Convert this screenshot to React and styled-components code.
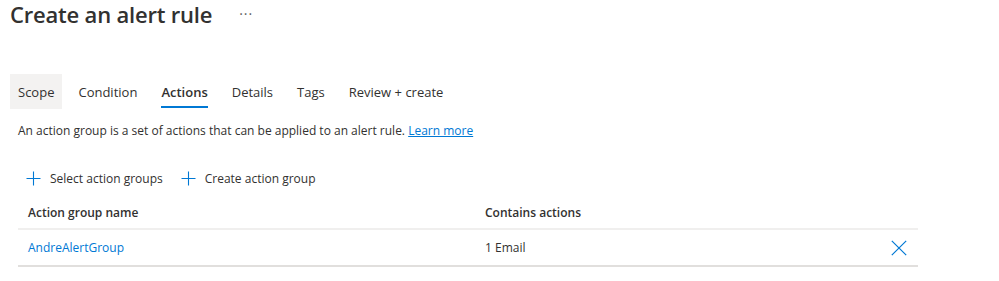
import React from "react";
import styled, { createGlobalStyle } from "styled-components";

const GlobalStyle = createGlobalStyle`
  body {
    margin: 0;
    background: #ffffff;
    font-family: "Open Sans", "Noto Sans", Arial, sans-serif;
    color: #323130;
  }
`;

const Page = styled.div`
  width: 999px;
  height: 281px;
  padding: 0 0 0 10px;
  box-sizing: border-box;
  overflow: hidden;
`;

const TitleBar = styled.div`
  display: flex;
  align-items: center;
  height: 28px;
`;

const Title = styled.h1`
  margin: 0;
  font-size: 22px;
  font-weight: 600;
  letter-spacing: -0.2px;
  color: #323130;
  line-height: 28px;
`;

const More = styled.span`
  margin-left: 27px;
  font-size: 14px;
  line-height: 20px;
  color: #605e5c;
  letter-spacing: 1px;
`;

const Tabs = styled.div`
  display: flex;
  gap: 8px;
  margin-top: 46px;
`;

const Tab = styled.div`
  position: relative;
  height: 35px;
  padding: 0 8px;
  display: flex;
  align-items: center;
  font-size: 13px;
  font-weight: ${(p) => (p.$active ? 600 : 400)};
  color: #323130;
  background: ${(p) => (p.$focused ? "#f3f2f1" : "transparent")};

  &::after {
    content: "";
    display: ${(p) => (p.$active ? "block" : "none")};
    position: absolute;
    left: 8px;
    right: 8px;
    bottom: 1px;
    height: 2px;
    background: #0078d4;
  }
`;

const Description = styled.p`
  margin: 13px 0 0 8px;
  font-size: 12px;
  line-height: 18px;
  color: #323130;

  a {
    color: #0078d4;
    text-decoration: underline;
  }
`;

const CommandBar = styled.div`
  display: flex;
  margin: 23px 0 0 8px;
  gap: 2px;
`;

const Command = styled.button`
  display: flex;
  align-items: center;
  gap: 9px;
  height: 30px;
  padding: 0 8px;
  border: none;
  background: none;
  font-family: inherit;
  font-size: 12px;
  color: #323130;
  cursor: pointer;
`;

const Table = styled.div`
  width: 900px;
  margin: 4px 0 0 8px;
`;

const Row = styled.div`
  display: grid;
  grid-template-columns: 457px 1fr 38px;
  align-items: center;
  height: ${(p) => (p.$header ? "31px" : "35px")};
  border-bottom: 2px solid ${(p) => (p.$header ? "#f0efee" : "#e1dfdd")};
`;

const Cell = styled.div`
  padding-left: 10px;
  font-size: 12px;
  font-weight: ${(p) => (p.$header ? 600 : 400)};
  color: ${(p) => (p.$link ? "#0078d4" : "#323130")};
`;

const RemoveButton = styled.button`
  display: flex;
  align-items: center;
  justify-content: center;
  padding: 0;
  border: none;
  background: none;
  cursor: pointer;
`;

const PlusIcon = () => (
  <svg width="15" height="15" viewBox="0 0 15 15">
    <path d="M7.5 0.5v14M0.5 7.5h14" stroke="#0078d4" strokeWidth="1.1" fill="none" />
  </svg>
);

const CloseIcon = () => (
  <svg width="16" height="16" viewBox="0 0 16 16">
    <path d="M0.8 0.8l14.4 14.4M15.2 0.8L0.8 15.2" stroke="#0078d4" strokeWidth="1.2" fill="none" />
  </svg>
);

const tabs = ["Scope", "Condition", "Actions", "Details", "Tags", "Review + create"];

const App = () => {
  return (
    <Page>
      <GlobalStyle />
      <TitleBar>
        <Title>Create an alert rule</Title>
        <More>···</More>
      </TitleBar>
      <Tabs>
        {tabs.map((t) => (
          <Tab key={t} $active={t === "Actions"} $focused={t === "Scope"}>
            {t}
          </Tab>
        ))}
      </Tabs>
      <Description>
        An action group is a set of actions that can be applied to an alert rule.{" "}
        <a href="#">Learn more</a>
      </Description>
      <CommandBar>
        <Command>
          <PlusIcon />
          Select action groups
        </Command>
        <Command>
          <PlusIcon />
          Create action group
        </Command>
      </CommandBar>
      <Table>
        <Row $header>
          <Cell $header>Action group name</Cell>
          <Cell $header>Contains actions</Cell>
          <div />
        </Row>
        <Row>
          <Cell $link>AndreAlertGroup</Cell>
          <Cell>1 Email</Cell>
          <RemoveButton>
            <CloseIcon />
          </RemoveButton>
        </Row>
      </Table>
    </Page>
  );
};

export default App;
